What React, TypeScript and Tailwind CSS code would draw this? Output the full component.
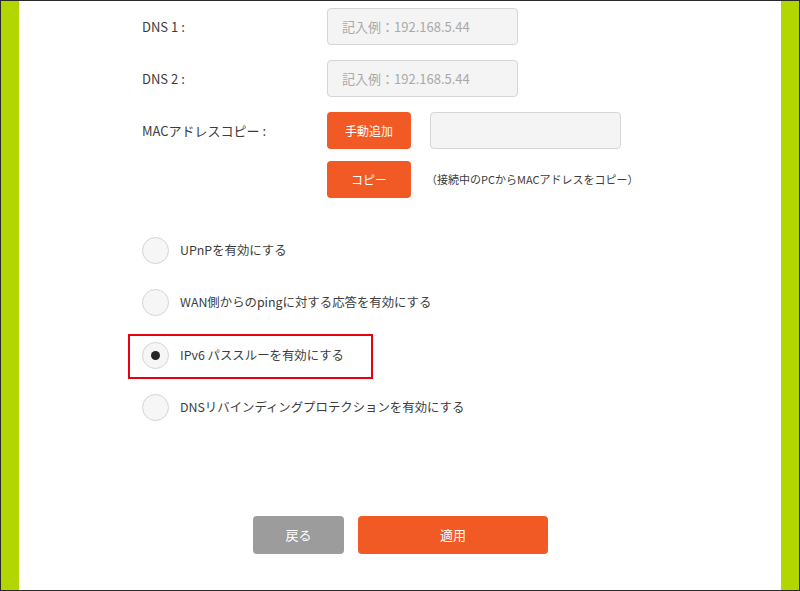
import { useState } from "react";

const font = { fontFamily: '"Noto Sans CJK JP", "Noto Sans", sans-serif' };

const options = [
  "UPnPを有効にする",
  "WAN側からのpingに対する応答を有効にする",
  "IPv6 パススルーを有効にする",
  "DNSリバインディングプロテクションを有効にする",
];

function Radio({ checked }: { checked: boolean }) {
  return (
    <span className="w-[27px] h-[27px] rounded-full border border-[#d4d4d4] bg-[#f6f6f6] flex items-center justify-center shrink-0">
      {checked && <span className="w-[9px] h-[9px] rounded-full bg-[#262626]" />}
    </span>
  );
}

export default function App() {
  const [selected, setSelected] = useState(2);

  return (
    <div
      className="w-[800px] h-[591px] border border-[#2a2a2a] flex bg-white text-[13px] text-[#3c3c3c] overflow-hidden"
      style={font}
    >
      <div className="w-[18px] bg-[#b2d700] shrink-0" />
      <div className="flex-1 pl-[123px] pt-[7px] flex flex-col">
        {/* DNS 1 */}
        <div className="flex items-center h-[37px]">
          <span className="w-[185px]">DNS 1 :</span>
          <input
            placeholder="記入例：192.168.5.44"
            className="w-[191px] h-[37px] rounded-[4px] border border-[#d6d6d6] bg-[#f4f4f4] px-[14px] text-[13px] placeholder:text-[#a9a9a9] outline-none"
          />
        </div>

        {/* DNS 2 */}
        <div className="flex items-center h-[37px] mt-[15px]">
          <span className="w-[185px]">DNS 2 :</span>
          <input
            placeholder="記入例：192.168.5.44"
            className="w-[191px] h-[37px] rounded-[4px] border border-[#d6d6d6] bg-[#f4f4f4] px-[14px] text-[13px] placeholder:text-[#a9a9a9] outline-none"
          />
        </div>

        {/* MAC address copy */}
        <div className="flex items-center h-[37px] mt-[15px]">
          <span className="w-[185px]">MACアドレスコピー :</span>
          <button className="w-[84px] h-[37px] rounded-[4px] bg-[#f15a24] text-white text-[12px]">手動追加</button>
          <input className="ml-[19px] w-[191px] h-[37px] rounded-[4px] border border-[#d6d6d6] bg-[#f4f4f4] px-[14px] outline-none" />
        </div>
        <div className="flex items-center h-[37px] mt-[12px] pl-[185px]">
          <button className="w-[84px] h-[37px] rounded-[4px] bg-[#f15a24] text-white text-[12px]">コピー</button>
          <span className="ml-[15px] text-[11px]">（接続中のPCからMACアドレスをコピー）</span>
        </div>

        {/* Options */}
        <div className="flex flex-col mt-[39px] text-[12.4px]">
          {options.map((label, i) => (
            <div
              key={label}
              onClick={() => setSelected(i)}
              className={
                i === 2
                  ? "relative flex items-center gap-[11px] h-[27px] mt-[26px] cursor-pointer"
                  : "flex items-center gap-[11px] h-[27px] cursor-pointer " + (i === 0 ? "" : i === 1 ? "mt-[25px]" : "mt-[25px]")
              }
            >
              <Radio checked={selected === i} />
              <span>{label}</span>
              {i === 2 && (
                <span className="absolute left-[-14px] top-[-8px] w-[245px] h-[45px] border-2 border-[#e60012] pointer-events-none" />
              )}
            </div>
          ))}
        </div>

        {/* Footer buttons */}
        <div className="flex gap-[14px] mt-[95px] pl-[111px]">
          <button className="w-[91px] h-[38px] rounded-[4px] bg-[#9c9c9c] text-white">戻る</button>
          <button className="w-[190px] h-[38px] rounded-[4px] bg-[#f15a24] text-white">適用</button>
        </div>
      </div>
      <div className="w-[18px] bg-[#b2d700] shrink-0" />
    </div>
  );
}
